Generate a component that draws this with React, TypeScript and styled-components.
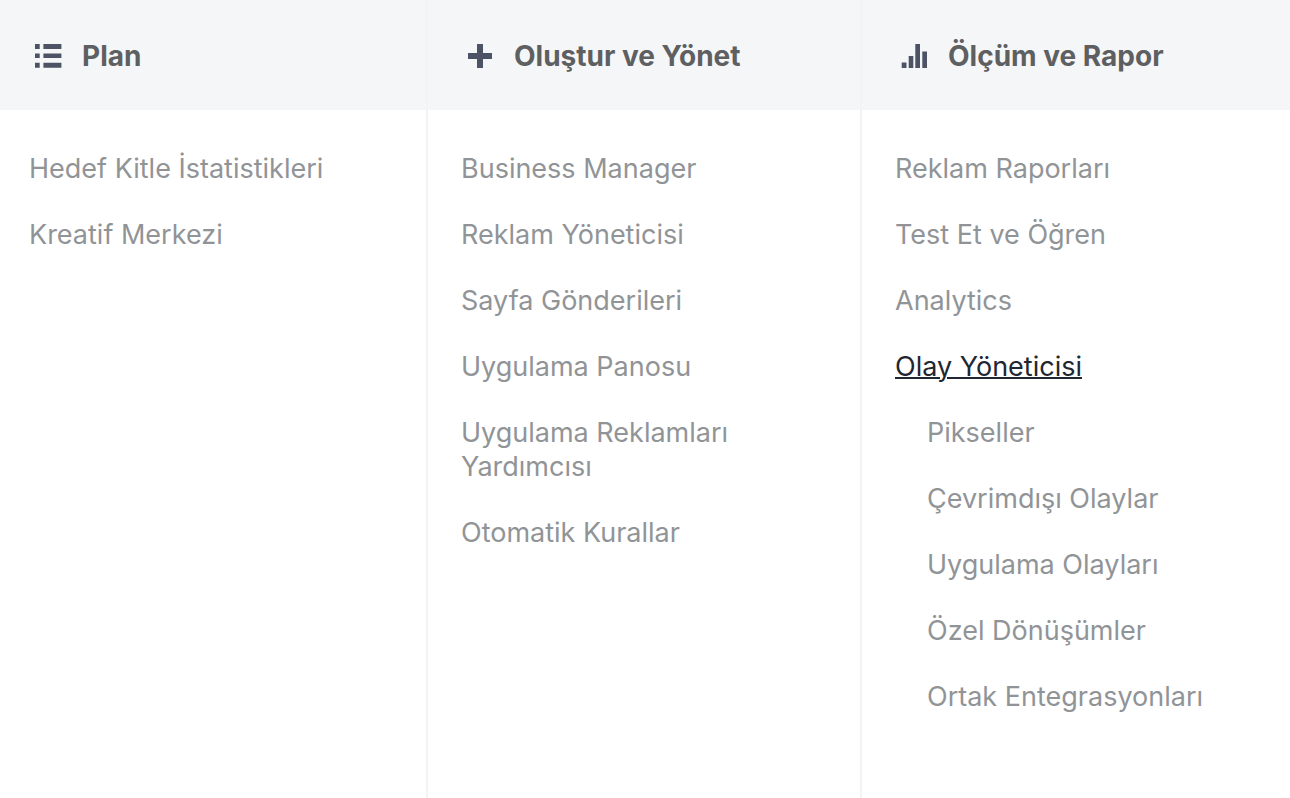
import React from "react";
import styled, { createGlobalStyle } from "styled-components";

const GlobalStyle = createGlobalStyle`
  * { box-sizing: border-box; }
  body { margin: 0; background: #fff; font-family: Inter, "Liberation Sans", sans-serif; }
`;

const Menu = styled.nav`
  display: grid;
  grid-template-columns: 426fr 434fr 430fr;
  min-height: 100vh;
`;

const Column = styled.section`
  display: flex;
  flex-direction: column;
  --inset: 29px;
  & + & {
    --inset: 33px;
    border-left: 2px solid #f2f3f4;
  }
`;

const Header = styled.header`
  display: flex;
  align-items: center;
  gap: 18px;
  height: 110px;
  padding: 2px 16px 0 calc(var(--inset) + 3px);
  background: #f5f6f8;
`;

const Icon = styled.svg`
  flex: none;
  width: 32px;
  height: 32px;
  fill: #4b5364;
`;

const Title = styled.h2`
  margin: 0;
  font-size: 28px;
  line-height: 34px;
  font-weight: 700;
  color: #5e5f61;
`;

const List = styled.ul<{ $nested?: boolean }>`
  list-style: none;
  margin: 0;
  display: flex;
  flex-direction: column;
  gap: 32px;
  padding: ${(p) => (p.$nested ? "32px 0 0 32px" : "42px 32px 42px var(--inset)")};
`;

const Link = styled.a<{ $active?: boolean }>`
  display: block;
  font-size: 27px;
  line-height: 34px;
  color: ${(p) => (p.$active ? "#1e2732" : "#919497")};
  text-decoration: ${(p) => (p.$active ? "underline" : "none")};
  text-decoration-thickness: 2px;
`;

type Item = { label: string; active?: boolean; children?: Item[] };

const Items = ({ items, nested }: { items: Item[]; nested?: boolean }) => (
  <List $nested={nested}>
    {items.map((item) => (
      <li key={item.label}>
        <Link href="#" $active={item.active}>{item.label}</Link>
        {item.children && <Items items={item.children} nested />}
      </li>
    ))}
  </List>
);

const columns: { title: string; icon: React.ReactNode; items: Item[] }[] = [
  {
    title: "Plan",
    icon: <path d="M3 4h4.700v5H3zM11.400 4h18v5h-18zM3 13.400h4.700v4.600H3zM11.400 13.400h18v4.600h-18zM3 22.800h4.700v5H3zM11.400 22.800h18v5h-18z" />,
    items: [{ label: "Hedef Kitle İstatistikleri" }, { label: "Kreatif Merkezi" }],
  },
  {
    title: "Oluştur ve Yönet",
    icon: <path d="M13 4h6v9h9v6h-9v9h-6v-9H4v-6h9z" />,
    items: [
      { label: "Business Manager" },
      { label: "Reklam Yöneticisi" },
      { label: "Sayfa Gönderileri" },
      { label: "Uygulama Panosu" },
      { label: "Uygulama Reklamları Yardımcısı" },
      { label: "Otomatik Kurallar" },
    ],
  },
  {
    title: "Ölçüm ve Rapor",
    icon: <path d="M3.700 22.400h4.800V28H3.700zM10.700 16h4.600v12h-4.600zM17.300 4H22v24h-4.700zM24.300 11.400H29V28h-4.700z" />,
    items: [
      { label: "Reklam Raporları" },
      { label: "Test Et ve Öğren" },
      { label: "Analytics" },
      {
        label: "Olay Yöneticisi",
        active: true,
        children: [
          { label: "Pikseller" },
          { label: "Çevrimdışı Olaylar" },
          { label: "Uygulama Olayları" },
          { label: "Özel Dönüşümler" },
          { label: "Ortak Entegrasyonları" },
        ],
      },
    ],
  },
];

export default function App() {
  return (
    <>
      <GlobalStyle />
      <Menu>
        {columns.map((column) => (
          <Column key={column.title}>
            <Header>
              <Icon viewBox="0 0 32 32" aria-hidden="true">{column.icon}</Icon>
              <Title>{column.title}</Title>
            </Header>
            <Items items={column.items} />
          </Column>
        ))}
      </Menu>
    </>
  );
}
